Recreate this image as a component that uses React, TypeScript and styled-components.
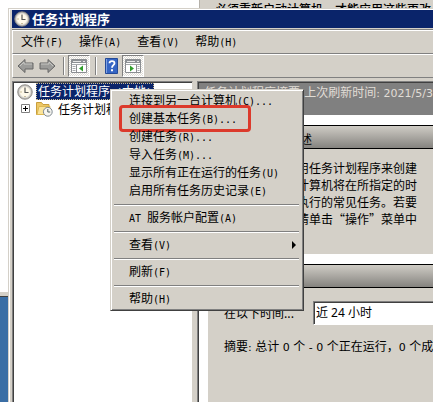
import React from 'react';
import styled, { createGlobalStyle, css } from 'styled-components';

const FACE = '#d4d0c8';
const SHADOW = '#808080';
const DARK = '#404040';
const NAVY = '#0a246a';

const GlobalStyle = createGlobalStyle`
  * { box-sizing: border-box; }
  html, body { margin: 0; overflow: hidden; }
  body, button, select {
    font-family: 'Noto Sans CJK SC', sans-serif;
    font-size: 12px;
    line-height: 18px;
    color: #000;
  }
  button { border: 0; padding: 0; background: none; text-align: left; white-space: pre; }
`;

const Desktop = styled.div`
  position: relative;
  display: grid;
  grid-template-columns: 200px 1fr;
  grid-template-rows: 296px 1fr;
  height: 100vh;
  overflow: hidden;
  background: #3a6ea5;
`;

const BackWindow = styled.div`
  background: #fff;
  border-bottom: 4px solid ${FACE};
  border-right: 1px solid #b5b1a9;
  box-shadow: 0 1px ${DARK};
`;

const BackDialog = styled.div`
  height: 120px;
  background: ${FACE};
  padding-left: 15px;
  overflow: hidden;
  white-space: nowrap;
  font-weight: 500;
`;

const Window = styled.main`
  position: absolute;
  inset: 8px 0 0 8px;
  display: flex;
  flex-direction: column;
  background: ${FACE};
  border-left: 1px solid ${FACE};
  border-top: 1px solid ${FACE};
  box-shadow: inset 1px 1px #fff;
  padding: 1px 0 0 3px;
`;

const TitleBar = styled.header`
  display: flex;
  align-items: center;
  gap: 2px;
  height: 18px;
  padding-left: 2px;
  background: ${NAVY};
`;

const Title = styled.h1`
  margin: 0;
  color: #fff;
  font-size: 13px;
  line-height: 18px;
  font-weight: 700;
`;

const Bar = styled.nav`
  display: flex;
  align-items: center;
  height: 24px;
  border: solid;
  border-width: 1px 0 1px 1px;
  border-color: #fff ${SHADOW} ${SHADOW} #fff;
`;

const MenuBar = styled(Bar)`
  margin-top: 2px;
  box-shadow: 0 -1px ${SHADOW};
`;

const ToolBar = styled(Bar)`
  padding-left: 1px;
`;

const MenuBarButton = styled.button`
  padding: 0 8px;
`;

const KeyText = styled.span`
  font-family: 'DejaVu Sans Mono', monospace;
  font-size: 10px;
`;

const ToolButton = styled.button<{ $pressed?: boolean }>`
  display: flex;
  align-items: center;
  justify-content: center;
  width: 22px;
  height: 22px;
  ${({ $pressed }) =>
    $pressed &&
    css`
      background: repeating-conic-gradient(#fff 0 25%, #dedbd5 0 50%) 0 0 / 2px 2px;
      border: 1px solid;
      border-color: ${SHADOW} #fff #fff ${SHADOW};
    `}
`;

const Divider = styled.span`
  width: 2px;
  height: 18px;
  margin: 0 3px 0 5px;
  border-left: 1px solid ${SHADOW};
  border-right: 1px solid #fff;
`;

const Panes = styled.div`
  display: grid;
  grid-template-columns: 181px 1fr;
  gap: 4px;
  flex: 1;
  min-height: 0;
  margin-top: 3px;
`;

const paneFrame = css`
  border-top: 1px solid ${SHADOW};
  border-left: 1px solid ${SHADOW};
  box-shadow: inset 1px 1px ${DARK};
  background: #fff;
  overflow: hidden;
`;

const TreePane = styled.section`
  ${paneFrame}
  border-right: 1px solid ${FACE};
  padding: 1px 0 0 4px;
`;

const TreeRow = styled.div<{ $child?: boolean }>`
  display: flex;
  align-items: center;
  gap: 3px;
  height: 17px;
  padding-left: ${({ $child }) => ($child ? 4 : 0)}px;
  white-space: pre;
`;

const TreeLabel = styled.span<{ $selected?: boolean }>`
  padding: 0 2px;
  line-height: 15px;
  ${({ $selected }) =>
    $selected &&
    css`
      color: #fff;
      background: ${NAVY};
      outline: 1px dotted #c9b98f;
      outline-offset: -1px;
    `}
`;

const Expander = styled.button`
  display: flex;
  margin-right: 3px;
`;

const DetailPane = styled.section`
  ${paneFrame}
  padding: 1px 0 0 1px;
  display: flex;
  flex-direction: column;
  white-space: nowrap;
`;

const Banner = styled.h2`
  margin: 0;
  flex: none;
  height: 32px;
  padding-left: 5px;
  background: ${SHADOW};
  color: #e0ddd6;
  font-size: 12px;
  line-height: 17px;
  font-weight: 400;
`;

const LatinText = styled.span`
  font-family: 'DejaVu Sans', sans-serif;
  font-size: 11px;
`;

const Group = styled.section`
  margin: 10px 0 0 9px;
  background: ${FACE};
  &:last-child { flex: 1; }
`;

const GroupTitle = styled.h3`
  margin: 0;
  height: 24px;
  padding-left: 8px;
  border: solid #000;
  border-width: 1px 0;
  background: linear-gradient(#cfccc5, #85837f);
  font-size: 12px;
  line-height: 26px;
  font-weight: 400;
`;

const Summary = styled.p`
  margin: 0;
  padding: 10px 0 27px 53px;
  line-height: 17px;
`;

const Field = styled.div`
  display: grid;
  grid-template-columns: 89px 1fr;
  align-items: center;
  margin: 13px 0 0 16px;
`;

const PeriodSelect = styled.select`
  appearance: none;
  height: 24px;
  min-width: 0;
  padding: 0 2px;
  border: solid;
  border-width: 1px 0 1px 1px;
  border-color: ${SHADOW} ${FACE} #fff ${SHADOW};
  border-radius: 0;
  box-shadow: inset 1px 1px ${DARK};
  background: #fff;
  font-family: 'Noto Sans', 'Noto Sans CJK SC', sans-serif;
`;

const Totals = styled.p`
  margin: 0;
  padding: 12px 0 0 16px;
`;

const ContextMenu = styled.div`
  position: absolute;
  left: 110px;
  top: 89px;
  width: 194px;
  padding: 2px 2px 2px 1px;
  background: ${FACE};
  border: 1px solid;
  border-color: ${FACE} ${DARK} ${DARK} ${FACE};
  box-shadow: inset 1px 1px #fff, inset -1px -1px ${SHADOW};
`;

const MenuItem = styled.button`
  position: relative;
  display: flex;
  align-items: center;
  width: 100%;
  height: 18px;
  padding: 0 5px 0 17px;
`;

const MenuText = styled.span`
  flex: 1;
`;

const MenuRule = styled.hr`
  height: 2px;
  margin: 4px 2px 3px;
  border: 0;
  border-top: 1px solid ${SHADOW};
  border-bottom: 1px solid #fff;
`;

const Highlight = styled.span`
  position: absolute;
  inset: -5px 50px -4px 7px;
  border: 3px solid #dc3a2c;
  border-radius: 4px;
`;

const Key = ({ children }: { children: React.ReactNode }) => <KeyText>{children}</KeyText>;

const ClockIcon = ({ size = 16 }: { size?: number }) => (
  <svg width={size} height={size} viewBox="0 0 16 16" aria-hidden="true">
    <circle cx="8" cy="8" r="7.3" fill="#bbb9b5" stroke="#85827c" strokeWidth=".8" />
    <circle cx="8" cy="8" r="5.6" fill="#fff9e9" stroke="#dedbd5" />
    <path d="M8 3.5V8.5h3.5" fill="none" stroke="#555" strokeWidth="1.2" />
    <path d="M3.5 8h1M8 12v1" stroke="#96824e" />
  </svg>
);

const ArrowIcon = ({ back }: { back?: boolean }) => (
  <svg width="17" height="16" viewBox="0 0 17 16" aria-hidden="true">
    <path
      d={back ? 'M1 8 8 1.5V5h8v6H8v3.5Z' : 'M16 8 9 1.5V5H1v6h8v3.5Z'}
      fill="#9b9b99"
      stroke="#666"
      strokeLinejoin="round"
    />
    <path d={back ? 'M3 8 7 4v2h8' : 'M2 6h8V4l4 4'} fill="none" stroke="#c7c7c4" />
  </svg>
);

const PaneIcon = ({ right }: { right?: boolean }) => (
  <svg width="16" height="14" viewBox="0 0 16 14" aria-hidden="true">
    <path d="M.5 .5h15v13H.5Z" fill="#fff" stroke="#8b8e92" />
    <path d="M1 1h14v3H1Z" fill="#8c9094" />
    <path d="M2 2.5h8M12 2.5h2" stroke="#e8e8e8" />
    <path d="M1 5.5h14" stroke="#a7aaad" />
    <path d={right ? 'M11.5 6v7' : 'M5.5 6v7'} stroke="#8b8e92" />
    <path d={right ? 'M12.5 7.5h2M12.5 9.5h2M12.5 11.5h2' : 'M1.5 7.5h3M1.5 9.5h3M1.5 11.5h3'} stroke="#a7aaad" />
    <path d={right ? 'M5 6.5v6L9 9.5Z' : 'M12 6.5v6L8 9.5Z'} fill="#2f9e2b" />
  </svg>
);

const HelpIcon = () => (
  <svg width="13" height="16" viewBox="0 0 13 16" aria-hidden="true">
    <path d="M.5 .5h12v15H.5Z" fill="#3565c4" stroke="#244a98" />
    <path d="M1.5 1v14" stroke="#7fa1e2" />
    <path d="M4.5 5.2C4.5 2.4 9.5 2.3 9.5 5.2c0 2-2.5 2-2.5 4.6" fill="none" stroke="#fff" strokeWidth="1.8" />
    <path d="M6 11.2h2v2H6Z" fill="#fff" />
  </svg>
);

const FolderClockIcon = () => (
  <svg width="17" height="16" viewBox="0 0 17 16" aria-hidden="true">
    <path d="M.5 13.5v-12h5l1.5 2h6v10Z" fill="#edc765" stroke="#c99e3c" />
    <path d="M1 13.5 3 5.5h11l-1.5 8Z" fill="#fbe49a" stroke="#ddb852" />
    <circle cx="11.8" cy="10.8" r="4.4" fill="#f7f6f1" stroke="#7e8890" />
    <path d="M11.8 8v3h2.4" fill="none" stroke="#566" />
  </svg>
);

const PlusIcon = () => (
  <svg width="9" height="9" viewBox="0 0 9 9" aria-hidden="true">
    <path d="M.5 .5h8v8h-8Z" fill="#fff" stroke="#808080" />
    <path d="M2 4.5h5M4.5 2v5" stroke="#000" />
  </svg>
);

const SubmenuIcon = () => (
  <svg width="4" height="8" viewBox="0 0 4 8" aria-hidden="true">
    <path d="M0 0v8l4-4Z" />
  </svg>
);

const menuBar = [
  ['文件', '(F)'],
  ['操作', '(A)'],
  ['查看', '(V)'],
  ['帮助', '(H)'],
];

type Item = { text: string; keys: string; prefix?: string; marked?: boolean; submenu?: boolean };

const menuGroups: Item[][] = [
  [
    { text: '连接到另一台计算机', keys: '(C)...' },
    { text: '创建基本任务', keys: '(B)...', marked: true },
    { text: '创建任务', keys: '(R)...' },
    { text: '导入任务', keys: '(M)...' },
    { text: '显示所有正在运行的任务', keys: '(U)' },
    { text: '启用所有任务历史记录', keys: '(E)' },
  ],
  [{ prefix: 'AT ', text: '服务帐户配置', keys: '(A)' }],
  [{ text: '查看', keys: '(V)', submenu: true }],
  [{ text: '刷新', keys: '(F)' }],
  [{ text: '帮助', keys: '(H)' }],
];

export default function App() {
  return (
    <Desktop>
      <GlobalStyle />
      <BackWindow />
      <BackDialog>必须重新启动计算机，才能应用这些更改</BackDialog>
      <Window>
        <TitleBar>
          <ClockIcon />
          <Title>任务计划程序</Title>
        </TitleBar>
        <MenuBar>
          {menuBar.map(([text, key]) => (
            <MenuBarButton key={text}>
              {text}
              <Key>{key}</Key>
            </MenuBarButton>
          ))}
        </MenuBar>
        <ToolBar>
          <ToolButton aria-label="后退"><ArrowIcon back /></ToolButton>
          <ToolButton aria-label="前进"><ArrowIcon /></ToolButton>
          <Divider />
          <ToolButton $pressed aria-label="显示控制台树"><PaneIcon /></ToolButton>
          <Divider />
          <ToolButton aria-label="帮助"><HelpIcon /></ToolButton>
          <ToolButton $pressed aria-label="显示操作窗格"><PaneIcon right /></ToolButton>
        </ToolBar>
        <Panes>
          <TreePane>
            <TreeRow>
              <ClockIcon />
              <TreeLabel $selected>任务计划程序<Key> (</Key>本地<Key>)</Key></TreeLabel>
            </TreeRow>
            <TreeRow $child>
              <Expander aria-label="展开"><PlusIcon /></Expander>
              <FolderClockIcon />
              <TreeLabel>任务计划程序库</TreeLabel>
            </TreeRow>
          </TreePane>
          <DetailPane>
            <Banner>
              任务计划程序摘要<LatinText>(</LatinText>上次刷新时间<LatinText>: 2021/5/3</LatinText>
            </Banner>
            <Group>
              <GroupTitle>任务计划程序概述</GroupTitle>
              <Summary>
                您可使用任务计划程序来创建<br />
                和管理计算机将在所指定的时<br />
                间自动执行的常见任务。若要<br />
                开始，请单击“操作”菜单中
              </Summary>
            </Group>
            <Group>
              <GroupTitle>任务状态</GroupTitle>
              <Field>
                <label htmlFor="period">在以下时间...</label>
                <PeriodSelect id="period">
                  <option>近 24 小时</option>
                </PeriodSelect>
              </Field>
              <Totals>
                摘要<LatinText>: </LatinText>总计<LatinText> 0 </LatinText>个<LatinText> - 0 </LatinText>
                个正在运行，<LatinText>0 </LatinText>个成
              </Totals>
            </Group>
          </DetailPane>
        </Panes>
      </Window>
      <ContextMenu>
        {menuGroups.map((group, index) => (
          <React.Fragment key={index}>
            {index > 0 && <MenuRule />}
            {group.map((item) => (
              <MenuItem key={item.text}>
                <MenuText>
                  {item.prefix && <Key>{item.prefix}</Key>}
                  {item.text}
                  <Key>{item.keys}</Key>
                </MenuText>
                {item.submenu && <SubmenuIcon />}
                {item.marked && <Highlight />}
              </MenuItem>
            ))}
          </React.Fragment>
        ))}
      </ContextMenu>
    </Desktop>
  );
}
